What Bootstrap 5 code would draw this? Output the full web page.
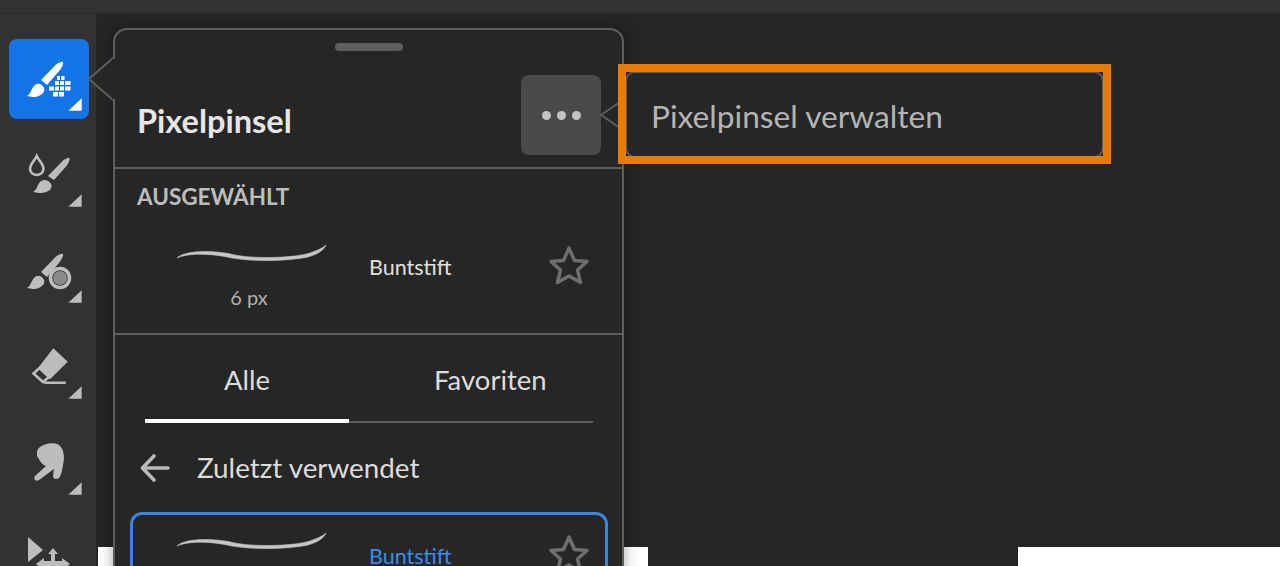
<!DOCTYPE html>
<html lang="de">
<head>
    <meta charset="UTF-8">
    <meta name="viewport" content="width=device-width, initial-scale=1.0">
    <title>Pixelpinsel</title>
    <link href="https://cdn.jsdelivr.net/npm/bootstrap@5.3.0/dist/css/bootstrap.min.css" rel="stylesheet">
    <style>
    html, body { height: 566px; overflow: hidden; }
    body { background: #252525; font-family: "Lato", "Open Sans", sans-serif; color: #e0e0e0; }
    .top-strip { height: 14px; background: #323232; border-bottom: 1px solid #2a2a2a; }
    .work-area { height: 552px; overflow: hidden; }
    .tool-rail { width: 96px; background: #323232; padding: 25px 0 0 9px; gap: 16px; flex-shrink: 0; overflow: hidden; }
    .tool-btn { width: 80px; height: 80px; padding: 0; border: 0; border-radius: 8px; background: transparent; flex-shrink: 0; display: block; }
    .tool-btn.is-on { background: #1473e6; }
    .tool-btn svg { display: block; }
    .doc-canvas { position: relative; }
    .doc-page { position: absolute; top: 533px; height: 19px; background: #fff; }
    .brush-panel { position: absolute; left: 17px; top: 14px; width: 511px; height: 560px; background: #262626; border: 2px solid #5e5e5e; border-radius: 14px; box-shadow: 0 0 14px rgba(0,0,0,.35); }
    .panel-tip { position: absolute; left: -27px; top: 26px; }
    .panel-head { height: 139px; border-bottom: 2px solid #5e5e5e; position: relative; }
    .drag-handle { position: absolute; left: 220px; top: 13px; width: 68px; height: 8px; border-radius: 4px; background: #5e5e5e; }
    .panel-title { position: absolute; left: 22px; top: 69px; margin: 0; font-size: 32.5px; line-height: 44px; font-weight: 700; color: #e6e6e6; }
    .more-btn { position: absolute; left: 406px; top: 45px; width: 80px; height: 80px; border: 0; border-radius: 8px; background: #4a4a4a; gap: 6px; }
    .more-btn i { width: 9px; height: 9px; border-radius: 50%; background: #c4c4c4; display: block; }
    .picked-box { height: 166px; border-bottom: 2px solid #5e5e5e; padding: 14px 0 0; }
    .picked-label { font-size: 22.5px; line-height: 28px; font-weight: 700; color: #bdbdbd; margin: 0 0 0 22px; }
    .brush-row { height: 100px; }
    .stroke-col { width: 254px; flex-shrink: 0; padding: 27px 0 0 55px; align-self: flex-start; }
    .stroke-col svg { display: block; }
    .stroke-line { fill: #c6c6c6; stroke: #c6c6c6; stroke-width: .6; }
    .size-text { width: 158px; margin-top: 20px; text-align: center; font-size: 20px; line-height: 26px; color: #b0b0b0; }
    .brush-name { font-size: 21.5px; line-height: 28px; color: #e0e0e0; width: 178px; flex-shrink: 0; }
    .brush-row .brush-name { margin-top: 12px; }
    .brush-row .fav-star { margin-top: 10px; }
    .tab-strip { margin: 0 29px 0 30px; height: 88px; border-bottom: 2px solid #5e5e5e; }
    .tab-item { height: 88px; font-size: 27.5px; color: #dcdcdc; padding: 26px 0 0; line-height: 38px; text-decoration: none; }
    .tab-item.is-on { width: 204px; text-align: center; border-bottom: 4px solid #fff; margin-bottom: -2px; }
    .tab-item.other { padding-left: 85px; }
    .back-row { height: 90px; padding-left: 25px; font-size: 27.8px; color: #dcdcdc; gap: 27px; }
    .recent-card { margin: -1px 14px 0 15px; height: 120px; border: 3px solid #3a86dc; border-radius: 12px; }
    .recent-card .stroke-col { width: 236px; padding: 11px 0 0 37px; }
    .recent-card .brush-name { color: #378ef0; padding-top: 27px; }
    .recent-card .fav-star { margin-top: 18px; }
    .menu-pop { position: absolute; left: 529px; top: 57px; width: 479px; height: 87px; background: #262626; border: 2px solid #5e5e5e; border-radius: 10px; padding: 4px 0 0 24px; font-size: 31.7px; color: #b4b4b4; }
    .menu-tip { position: absolute; left: -27px; top: 24px; }
    .hl-frame { position: absolute; left: 522px; top: 50px; width: 493px; height: 100px; border: 8px solid #e87b00; }
    </style>
</head>
<body>
    <div class="top-strip"></div>
    <div class="work-area d-flex">
        <div class="tool-rail d-flex flex-column">
            <button class="tool-btn is-on" type="button">
                <svg width="80" height="80" viewBox="0 0 80 80" fill="#fff">
                    <path d="M47 25.500 C49 24 53 22 54 23 C54.500 25 53 28 51 31 L38 46 L32 41 Z"/>
                    <path d="M18 57 C22 55 22 50 25 47 C27 44.500 30 44 32 45.500 C35 47.500 36 50 35 52.500 C33 56 29 58 24 58 Z"/>
                    <g>
                        <rect x="48" y="37" width="3" height="4"/><rect x="52" y="37" width="3.500" height="4"/>
                        <rect x="46" y="42" width="4" height="4"/><rect x="51" y="42" width="4" height="4"/><rect x="56" y="42" width="5.500" height="4"/>
                        <rect x="40" y="47.500" width="5" height="4"/><rect x="46" y="47.500" width="4" height="4"/><rect x="51" y="47.500" width="4" height="4"/><rect x="56" y="47.500" width="5.500" height="4"/>
                        <rect x="44" y="53" width="5" height="4.500"/><rect x="50" y="53" width="5" height="4.500"/>
                    </g>
                    <path d="M59.300 71.700 L72.700 71.700 L72.700 59.300 Z"/>
                </svg>
            </button>
            <button class="tool-btn" type="button">
                <svg width="80" height="80" viewBox="0 0 80 80" fill="#bdbdbd">
                    <path d="M27.700 21 C30 26 34.500 29 34.500 34 A6.800 6.800 0 0 1 21 34 C21 29 25.500 26 27.700 21 Z" fill="none" stroke="#bdbdbd" stroke-width="2.600"/>
                    <path d="M54 25.500 C56 24 60 22 60.500 23 C61 25 59.500 28 57.500 31 L45 45 L39 41 Z"/>
                    <path d="M24 57 C28 55 28 50 31 47 C33.500 44.500 37 44.500 39 46 C41.500 47.500 43 49.500 42.500 52 C41.500 56 36 58 30 58 Z"/>
                    <path d="M59.300 71.700 L72.700 71.700 L72.700 59.300 Z"/>
                </svg>
            </button>
            <button class="tool-btn" type="button">
                <svg width="80" height="80" viewBox="0 0 80 80" fill="#bdbdbd">
                    <path d="M47 25.500 C49 24 53 22 54 23 C54.500 25 53 28 50 32 L38 46 L32 41 Z"/>
                    <path d="M18 57 C22 55 22 50 25 47 C27 44.500 30 44 32 45.500 C35 47.500 36 50 35 52.500 C33 56 29 58 24 58 Z"/>
                    <circle cx="51" cy="47" r="9.500" fill="none" stroke="#bdbdbd" stroke-width="3.500"/>
                    <circle cx="51" cy="47" r="7" fill="#8a8a8a"/>
                    <path d="M59.300 71.700 L72.700 71.700 L72.700 59.300 Z"/>
                </svg>
            </button>
            <button class="tool-btn" type="button">
                <svg width="80" height="80" viewBox="0 0 80 80" fill="#bdbdbd">
                    <path d="M44.300 21.300 L58.700 34.700 L41 52.300 L30 39.700 Z"/>
                    <path d="M30.500 41 L24.500 46.500 L34 55 L40 50 Z" fill="none" stroke="#bdbdbd" stroke-width="2.600"/>
                    <path d="M33 54.500 H56.700 V57 H36 Z"/>
                    <path d="M59.300 71.700 L72.700 71.700 L72.700 59.300 Z"/>
                </svg>
            </button>
            <button class="tool-btn" type="button">
                <svg width="80" height="80" viewBox="0 0 80 80" fill="#bdbdbd">
                    <path d="M31 24 C36 20 46 19 50 22 C55 26 56 34 54 42 C53 48 52 53 50 55 C47 57 44 56 44 53 L45 46 L30 57 C27 59 24 56 26 53 L37 43 C34 42 31 39 30 36 C27 33 27 27 31 24 Z"/>
                    <path d="M59.300 71.700 L72.700 71.700 L72.700 59.300 Z"/>
                </svg>
            </button>
            <button class="tool-btn" type="button">
                <svg width="80" height="80" viewBox="0 0 80 80" fill="#bdbdbd">
                    <path d="M19 18 L34 31 L19 43 Z"/>
                    <path d="M44 29 L49 35 H46 V42 H53 V39 L61 45 L53 51 V48 H35 V51 L27 45 L35 39 V42 H42 V35 H39 Z"/>
                </svg>
            </button>
        </div>

        <div class="doc-canvas flex-grow-1">
            <div class="doc-page" style="left: 2px; width: 550px"></div>
            <div class="doc-page" style="left: 922px; width: 262px"></div>

            <div class="brush-panel">
                <svg class="panel-tip" width="30" height="46" viewBox="0 0 30 46"><path d="M25 2 L1 23 L25 44" fill="#262626" stroke="#5e5e5e" stroke-width="2"/><rect x="24" y="3" width="6" height="40" fill="#262626"/></svg>
                <div class="panel-head">
                    <div class="drag-handle"></div>
                    <h1 class="panel-title">Pixelpinsel</h1>
                    <button class="more-btn btn d-flex align-items-center justify-content-center" type="button"><i></i><i></i><i></i></button>
                </div>
                <div class="picked-box">
                    <p class="picked-label">AUSGEWÄHLT</p>
                    <div class="brush-row d-flex align-items-center">
                        <div class="stroke-col">
                            <svg width="160" height="26" viewBox="170 238 160 26"><path class="stroke-line" d="M177 258 C185 250 215 250 235 255 C255 259 295 258 310 253 C318 250 323 248 326 245 C324 250 318 254 308 257 C290 261 255 262 232 258 C215 254 190 252 177 258 Z"/></svg>
                            <div class="size-text">6 px</div>
                        </div>
                        <div class="brush-name">Buntstift</div>
                        <svg class="fav-star" width="44" height="44" viewBox="0 0 44 44" fill="none" stroke="#6e6e6e" stroke-width="3.500" stroke-linejoin="round"><path d="M22 4 L27.500 16.500 L40 17.500 L30.500 26 L33.500 38.500 L22 32 L10.500 38.500 L13.500 26 L4 17.500 L16.500 16.500 Z"/></svg>
                    </div>
                </div>
                <div class="tab-strip d-flex">
                    <a class="tab-item is-on" href="#">Alle</a>
                    <a class="tab-item other" href="#">Favoriten</a>
                </div>
                <div class="back-row d-flex align-items-center">
                    <svg width="30" height="30" viewBox="0 0 30 30" fill="none" stroke="#b9b9b9" stroke-width="3.600" stroke-linecap="round" stroke-linejoin="round"><path d="M28 15 H3 M14 3 L2.500 15 L14 27"/></svg>
                    <span>Zuletzt verwendet</span>
                </div>
                <div class="recent-card d-flex">
                    <div class="stroke-col">
                        <svg width="160" height="26" viewBox="170 238 160 26"><path class="stroke-line" d="M177 258 C185 250 215 250 235 255 C255 259 295 258 310 253 C318 250 323 248 326 245 C324 250 318 254 308 257 C290 261 255 262 232 258 C215 254 190 252 177 258 Z"/></svg>
                    </div>
                    <div class="brush-name">Buntstift</div>
                    <svg class="fav-star" width="44" height="44" viewBox="0 0 44 44" fill="none" stroke="#6e6e6e" stroke-width="3.500" stroke-linejoin="round"><path d="M22 4 L27.500 16.500 L40 17.500 L30.500 26 L33.500 38.500 L22 32 L10.500 38.500 L13.500 26 L4 17.500 L16.500 16.500 Z"/></svg>
                </div>
            </div>

            <div class="menu-pop d-flex align-items-center">
                <svg class="menu-tip" width="28" height="36" viewBox="0 0 28 36"><path d="M26 1 L1 18 L26 35" fill="#262626" stroke="#5e5e5e" stroke-width="2"/></svg>
                Pixelpinsel verwalten
            </div>
            <div class="hl-frame"></div>
        </div>
    </div>
</body>
</html>
